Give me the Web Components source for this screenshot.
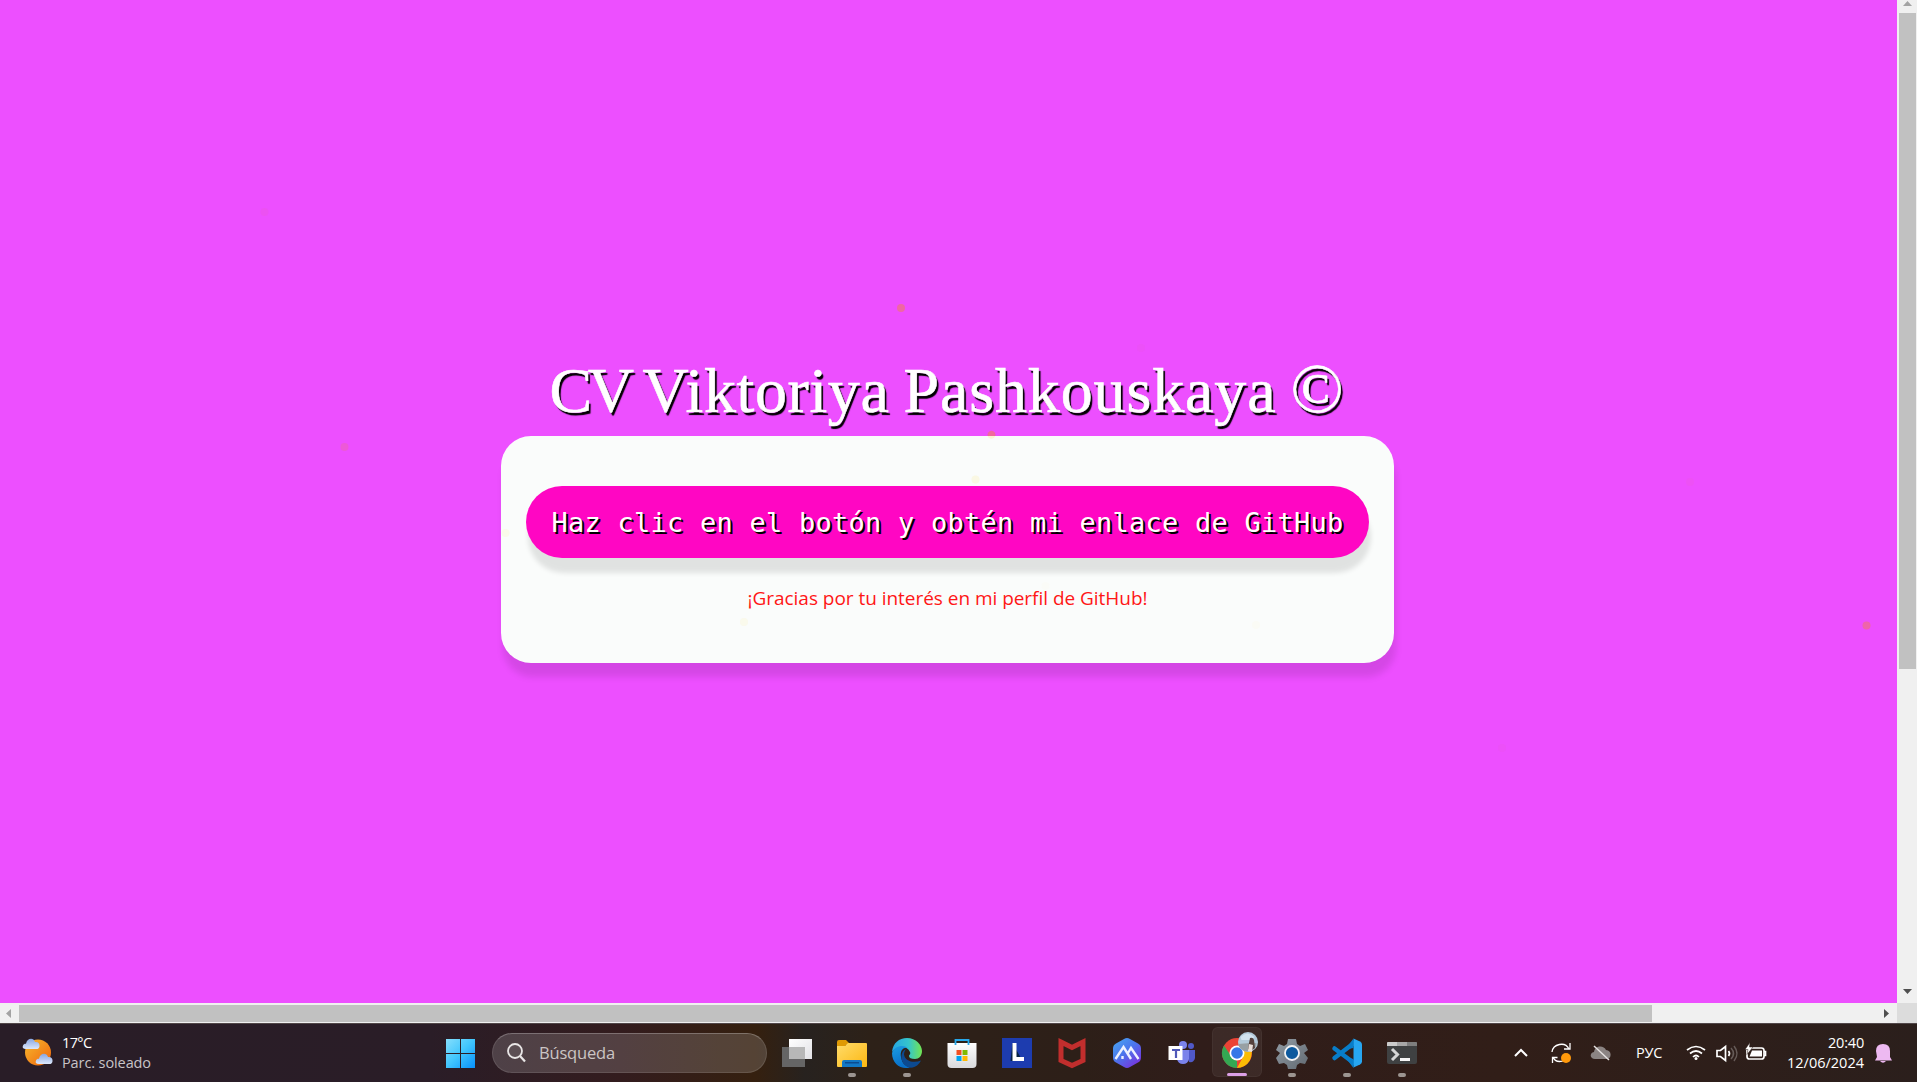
<!DOCTYPE html>
<html lang="es">
<head>
<meta charset="utf-8">
<title>CV Viktoriya Pashkouskaya</title>
<style>
html,body{margin:0;height:100%;overflow:hidden}
body{font-family:"Open Sans","Noto Sans",sans-serif}
</style>
</head>
<body>
<app-screen></app-screen>
<script>
const define=(name,html,init)=>customElements.define(name,class extends HTMLElement{
  connectedCallback(){
    if(this.shadowRoot)return;
    const t=document.createElement('template');
    t.innerHTML=html;
    this.attachShadow({mode:'open'}).append(t.content.cloneNode(true));
    if(init)init(this);
  }
});

/* Spreads the letters of a span so that it takes the width given in pixels. */
const fit=(s,w)=>{
  s.style.letterSpacing=(w-s.getBoundingClientRect().width)/s.textContent.length+'px';
};
define('fit-text',`<style>:host{display:block;white-space:pre}span{display:inline-block}</style><span></span>`,el=>{
  const s=el.shadowRoot.querySelector('span');
  s.textContent=el.getAttribute('text');
  fit(s,+el.getAttribute('width'));
});

define('page-title',`<style>
:host{display:block}
h1{margin:0;white-space:nowrap;color:#fff;font:400 64px/80px "Liberation Serif",serif;-webkit-text-stroke:.6px #fff;text-shadow:2px 3px 1px #000;word-spacing:-2px}
.c{font-size:70px;line-height:60px}
</style><h1><span data-w="79">CV</span> <span data-w="247">Viktoriya</span> <span data-w="373">Pashkouskaya</span> <span class="c" data-w="55">©</span></h1>`,el=>{
  el.shadowRoot.querySelectorAll('span').forEach(s=>fit(s,+s.dataset.w));
});

define('github-button',`<style>
:host{display:block}
button{display:flex;align-items:center;justify-content:center;box-sizing:border-box;width:843px;height:72px;border:0;border-radius:36px;background:#ff06c3;color:#fff;font:27px/35px "DejaVu Sans Mono",monospace;text-shadow:2px 2px 0 #000;box-shadow:2px 15px 5px rgba(0,0,0,.1);padding:0 25px}
</style><button><fit-text text="Haz clic en el botón y obtén mi enlace de GitHub" width="792"></fit-text></button>`);

define('thanks-message',`<style>
:host{display:block;color:#ff1616;font:400 19px/27px "Open Sans",sans-serif}
</style><fit-text text="¡Gracias por tu interés en mi perfil de GitHub!" width="400"></fit-text>`);

define('cv-card',`<style>
:host{display:flex;flex-direction:column;align-items:center;box-sizing:border-box;width:893px;height:227px;padding-top:50px;gap:27px;border-radius:30px;background:#fafcfb;box-shadow:2px 14px 7px rgba(0,0,0,.1)}
</style><slot></slot>`);

define('firefly-layer',`<style>:host{position:absolute;inset:0;pointer-events:none}svg{display:block}</style>
<svg width="1897" height="1003" fill="#f0707c">
<circle cx="901" cy="308" r="4" fill-opacity=".7"/><circle cx="264.500" cy="212" r="4" fill-opacity=".1"/>
<circle cx="344.500" cy="447" r="4" fill-opacity=".3"/><circle cx="1866.500" cy="625.500" r="4" fill-opacity=".65"/>
<circle cx="1141" cy="348" r="4" fill-opacity=".05"/><circle cx="1690" cy="482" r="4" fill-opacity=".08"/>
<circle cx="1502" cy="748" r="4" fill-opacity=".05"/>
<path d="M987.700 436a4 4 0 1 1 7.600 0z" fill-opacity=".75"/>
<g fill="#fbf3c0"><path d="M987.700 436h7.600a4 4 0 0 1-7.600 0z" fill-opacity=".7"/>
<circle cx="975.500" cy="479.500" r="4" fill-opacity=".4"/><circle cx="505.500" cy="533" r="4" fill-opacity=".28"/>
<circle cx="744" cy="622" r="4" fill-opacity=".25"/><circle cx="1045.500" cy="586" r="4" fill-opacity=".07"/>
<circle cx="1256" cy="625" r="4" fill-opacity=".1"/></g></svg>`);

define('scroll-bar',`<style>
:host{display:flex;background:#f0f0f0;box-sizing:border-box}
:host([dir-y]){width:20px;flex-direction:column;padding:0 1px 0 2px;align-items:stretch}
:host(:not([dir-y])){flex:1;height:20px;padding:2px 0 1px}
.box{display:contents}
i{background:#c1c1c1;flex:none}
svg{display:block;flex:none}
b{flex:1}
</style><div class="box"></div>`,el=>{
  el.shadowRoot.querySelector('.box').innerHTML=el.hasAttribute('dir-y')
  ?`<svg width="17" height="13"><path d="M4 6L8.500 1l4.500 5z" fill="#a3a3a3"/></svg><i style="height:656px"></i><b></b><svg width="17" height="18"><path d="M4 4h9L8.500 9z" fill="#4f4f4f"/></svg>`
  :`<svg width="19" height="17"><path d="M11 4v9L6 8.500z" fill="#a3a3a3"/></svg><i style="width:1633px"></i><b></b><svg width="20" height="17"><path d="M7 4v9l5-4.500z" fill="#4f4f4f"/></svg>`;
});

define('weather-widget',`<style>
:host{display:flex;align-items:center;gap:8px;width:444px;padding-left:22px;box-sizing:border-box;color:#fff;font:14.500px/20px "Open Sans",sans-serif}
.s{color:#c8c4c7}
</style><svg width="32" height="32" viewBox="0 0 32 32"><defs><linearGradient id="s" x1="0" y1="0" x2="1" y2="1"><stop stop-color="#f6ba2e"/><stop offset="1" stop-color="#f0640c"/></linearGradient><linearGradient id="c" x2="0" y2="1"><stop stop-color="#88a6e2"/><stop offset="1" stop-color="#dce8fb"/></linearGradient></defs>
<circle cx="16" cy="15.500" r="13" fill="url(#s)"/><path id="k" d="M4 12C1 12 0 10.500 1 8.500 1.500 7 3 6.500 4 6.800 5 1 11.500 0 13 5c3-.5 5 1.500 4.500 4.500C17 11.500 16 12 14.500 12z" fill="url(#c)"/><use href="#k" x="13" y="15"/></svg>
<div><fit-text text="17°C" width="29.500"></fit-text><fit-text class="s" text="Parc. soleado" width="89"></fit-text></div>`);

define('search-box',`<style>
:host{display:flex;align-items:center;gap:13px;width:275px;height:40px;box-sizing:border-box;border:1px solid rgba(255,255,255,.1);border-top-color:rgba(255,255,255,.25);border-radius:20px;background:rgba(255,255,255,.16);padding-left:14px;color:#cbc5c4;font:16.500px/22px "Open Sans",sans-serif}
</style><svg width="19" height="20" fill="none" stroke="#e9e6e6" stroke-width="1.800"><circle cx="8" cy="8" r="7" fill="#fff" fill-opacity=".08"/><path d="M13 13l5 5.500" stroke-width="2.200"/></svg><fit-text text="Búsqueda" width="76"></fit-text>`);

const icons={
start:`<defs><linearGradient id="w" gradientUnits="userSpaceOnUse" x1="3" y1="3" x2="33" y2="33"><stop stop-color="#8ae0fc"/><stop offset=".5" stop-color="#42c6fd"/><stop offset="1" stop-color="#0791fb"/></linearGradient></defs><path fill="url(#w)" d="M4 4h14v14H4zM19 4h14v14H19zM4 19h14v14H4zM19 19h14v14H19z"/>`,
tasks:`<defs><linearGradient id="a" x2="1" y2="1"><stop stop-color="#fff"/><stop offset="1" stop-color="#e1e1e5"/></linearGradient></defs><path fill="url(#a)" d="M10 4h23v20H10z"/><path fill="#656565" d="M3 12h23v20H3z"/><path fill="#b7b7b7" d="M10 12h16v12H10z"/>`,
files:`<defs><linearGradient id="a" x2="1" y2="1"><stop stop-color="#ffdc6b"/><stop offset="1" stop-color="#fcb711"/></linearGradient></defs><path fill="#df9a04" d="M3 7q0-2 2-2h7l4 4h-2l-3 2H3z"/><path fill="url(#a)" d="M3 11h8l3-3h18q1 0 1 1v22q0 1-1 1H4q-1 0-1-1z"/><path fill="#1278c5" d="M8 32v-5q0-2 2-2h16q2 0 2 2v5z"/><path fill="#0b4c90" d="M11 27h14v1.500H11z"/>`,
edge:`<defs><linearGradient id="a" x2="1"><stop stop-color="#25a5e4"/><stop offset=".55" stop-color="#35c5cc"/><stop offset="1" stop-color="#72e551"/></linearGradient><linearGradient id="b" x2=".3" y2="1"><stop stop-color="#1b9de2"/><stop offset="1" stop-color="#086fc9"/></linearGradient></defs><path fill="url(#a)" d="M3 17C4 8 10 3 18 3c9 0 15 7 15 13 0 5-3 8-7 8-4 0-6-1-6-3 0-1 2-2 1-4-3-7-13-6-18 0z"/><path fill="url(#b)" d="M3 18C5 11 14 9 19 13c-6-1-8 4-7 9 1 6 4 9 9 10.500C12 35 3 29 3 18z"/><path fill="#0c4a91" d="M17 14c-7 3-6 16 3 18.500 6 1 10-3 12-7-7 3-16 1-17-6 0-2 1-4 2-5.500z"/>`,
store:`<defs><linearGradient id="a" x2="0" y2="1"><stop stop-color="#fff"/><stop offset="1" stop-color="#d9d9dc"/></linearGradient></defs><path fill="url(#a)" d="M3.500 8h29v21q0 4-4 4h-21q-4 0-4-4z"/><path fill="none" stroke="#28a8ea" stroke-width="1.800" d="M11.500 10V5h13v5"/><path fill="#f25022" d="M12.500 15h5v5h-5z"/><path fill="#7fba00" d="M18.500 15h5v5h-5z"/><path fill="#00a4ef" d="M12.500 21h5v5h-5z"/><path fill="#ffb900" d="M18.500 21h5v5h-5z"/>`,
lapp:`<path fill="#1d3caf" d="M3 3h30v30H3z"/><path fill="#062345" d="M13.500 8l-2 18h12z"/><path fill="none" stroke="#fff" stroke-width="4" d="M15.500 8v16H25"/>`,
mcafee:`<path fill="none" stroke="#c12e2d" stroke-width="5" d="M7 7l11 5.500L29 7v18.500l-11 5-11-5z"/>`,
hexapp:`<defs><linearGradient id="a" y2="1" x2=".8"><stop stop-color="#48aaf2"/><stop offset=".5" stop-color="#4b75ec"/><stop offset="1" stop-color="#7930dd"/></linearGradient></defs><path fill="url(#a)" d="M15 4q3-2 6 0l8 4.500q3 1.500 3 5v9q0 3.500-3 5L21 32q-3 2-6 0l-8-4.500q-3-1.500-3-5v-9q0-3.500 3-5z"/><path d="M6.500 24l8-12 7.500 12M13.500 24v-3M19 18l3-5 7.500 11" fill="none" stroke="#edf1ff" stroke-width="2.400"/>`,
teams:`<circle cx="19" cy="10" r="4" fill="#7b83eb"/><circle cx="27" cy="11" r="3" fill="#5059c9"/><path fill="#5059c9" d="M23 15h8v8q-1 5-6 4z"/><path fill="#7b83eb" d="M13 15h12v9q-1 5-6 5t-6-5z"/><path fill="#fff" d="M4.500 11h14v14h-14z"/><path fill="none" stroke="#5059b9" stroke-width="2.200" d="M8 15h8M12 15v8"/>`,
chrome:`<circle cx="18" cy="18" r="15" fill="#ea4335"/><path fill="#34a853" d="M5 10.500l8 12L18 26v7A15 15 0 0 1 5 10.500z"/><path fill="#fbbc05" d="M18 11h13a15 15 0 0 1-13 22l6-11z"/><circle cx="18" cy="18" r="7.500" fill="#fff"/><circle cx="18" cy="18" r="5.800" fill="#3677e8"/><g><circle cx="29" cy="7" r="10" fill="#b3c9d9"/><path d="M19.300 9q9-1 18-1 1 4-4 7-8 4-13-3z" fill="#98a0a4"/><path d="M21.500 2q7-7 14 0l-4 3h-9z" fill="#d3e2ee"/><path d="M31 3q3-1 4 2l1 8-3 2-4-1 1-6z" fill="#55423d"/><path d="M30 9l4 1-1 7-4-1z" fill="#e9dfda"/></g>`,
settings:`<defs><linearGradient id="a" x2="1" y2="1"><stop stop-color="#919ba4"/><stop offset="1" stop-color="#626a72"/></linearGradient></defs><path fill="url(#a)" d="M14 4h8l1 5 3 2 5-2 3 6-4 3 4 5-3 6-5-1-3 2-1 4h-8l-1-4-3-2-5 1-3-6 4-5-4-3 3-6 5 2 3-2z"/><circle cx="18" cy="18" r="7" fill="#0c599e" stroke="#f1f2f4" stroke-width="1.800"/>`,
code:`<path fill="none" stroke="#087dc9" stroke-width="4.500" stroke-linecap="round" stroke-linejoin="round" d="M5.500 13.500L25 28M5.500 23L25 8"/><path fill="#27a6f1" d="M24.500 3.500l6.500 3q2 1 2 3v17q0 2-2 3l-6.500 3z"/><path fill="#087dc9" d="M16 14.500l8.500-11V13zM16 22l8.500 11V24z"/>`,
terminal:`<path fill="#3f4142" d="M3 7h30v20q0 2-2 2H5q-2 0-2-2z"/><path fill="#cbcbcb" d="M3 8q0-1 1-1h9v4H3z"/><path fill="#a7a7a7" d="M13 7h10v4H13z"/><path fill="#7e7e7e" d="M23 7h9q1 0 1 1v3H23z"/><path fill="none" stroke="#d5d5d5" stroke-width="3" d="M8 14l5.500 5.500L8 25"/><path fill="#f6f6f6" d="M16 23h10v3H16z"/>`
};
define('task-icon',`<style>
:host{display:flex;flex-direction:column;align-items:center;width:55px;height:59px;flex:none;padding-top:12px;box-sizing:border-box}
svg{display:block;overflow:visible;flex:none}
u{display:block;width:8px;height:4px;border-radius:2px;background:#9c9591;margin-top:2px;visibility:hidden}
:host([open]) u,:host([active]) u{visibility:visible}
:host([active]) u{width:20px;background:#dca0e6}
:host([active]){width:50px;height:50px;margin:0 2.500px 1px;padding-top:7px;border-radius:6px;background:rgba(255,255,255,.06);border:1px solid rgba(255,255,255,.04)}
</style><svg width="36" height="36" viewBox="0 0 36 36"></svg><u></u>`,el=>{
  el.shadowRoot.querySelector('svg').innerHTML=icons[el.getAttribute('name')];
});

define('system-tray',`<style>
:host{display:flex;align-items:center;margin-left:auto;height:59px;color:#fff;font:14.500px/20px "Open Sans",sans-serif}
svg{display:block;flex:none}
.t{display:flex;flex-direction:column;align-items:flex-end}
</style>
<svg fill="none" stroke="#fff" stroke-width="2" style="width:112px;height:59px" viewBox="1510 1023 112 59">
<path d="M1515 1056l6-6 6 6"/>
<path d="M1552 1052c1-8 13-11 17-3M1570 1043v6h-6M1567 1057c-3 6-12 6-14 0M1552.500 1063v-5.500h5" stroke-width="1.300"/><circle cx="1566" cy="1058" r="5" fill="#ff990b" stroke="none"/>
<path d="M1595 1059c-5 0-6-6-1-7 1-7 10-7 12-2 6 0 6 9 1 9z" fill="#8b8483" stroke="none"/><path d="M1594 1046l15 14" stroke="#e6e2e1" stroke-width="1.500"/></svg>
<fit-text text="РУС" width="26" style="margin-left:14px;width:26px"></fit-text>
<svg style="width:98px;height:59px;margin-left:19px" viewBox="1681 1023 98 59" fill="none" stroke="#fff" stroke-width="1.700">
<path d="M1687 1050q9-7 18 0M1690 1053.500q6-5 12 0M1693 1057q3-3 6 0"/><circle cx="1696" cy="1058.500" r="1.500" fill="#fff" stroke="none"/>
<path d="M1717 1050.500h3.500l5-4v14l-5-4h-3.500z"/><path d="M1728.500 1051q2 2.500 0 5"/><path d="M1731 1048q5 5.500 0 11M1734 1046q6 7.500 0 15" stroke="#665b58" stroke-width="1.500"/>
<rect x="1747" y="1048" width="17" height="11" rx="2.500"/><path d="M1752 1050.500h10v6h-12.500z" fill="#fff" stroke="none"/><path d="M1764 1051.500h1.500v4h-1.500"/><path d="M1750 1042.500l-5 7h3l-1 5 6-7.500h-3.500z" fill="#fff" stroke="#2d1d19" stroke-width=".5"/></svg>
<div class="t" style="width:85px"><fit-text text="20:40" width="36"></fit-text><fit-text text="12/06/2024" width="77"></fit-text></div>
<svg style="width:53px;height:59px" viewBox="1864 1023 53 59"><path d="M1876 1051q0-7 7-7t7 7v6l2 3.500h-17l2-3.500z" fill="#edb9f1"/><path d="M1880 1061h6q-3 3.500-6 0z" fill="#edb9f1"/></svg>`);

define('task-bar',`<style>
:host{display:flex;align-items:center;height:59px;box-sizing:border-box;box-shadow:inset 0 1px #514749;background:linear-gradient(90deg,#291d27 0,#2a1d27 430px,#331c1e 620px,#35200f 755px,#27221f 805px,#2d2118 870px,#2d1f18 1080px,#301d1a 1200px,#311e18 1500px,#2b1f1c 1917px)}
.a{display:flex;align-items:center}
task-icon[name=start]{width:31px;margin-right:17px}
search-box{margin-right:2px}
</style>
<weather-widget></weather-widget><div class="a"><task-icon name="start"></task-icon><search-box></search-box>
<task-icon name="tasks"></task-icon><task-icon name="files" open></task-icon><task-icon name="edge" open></task-icon><task-icon name="store"></task-icon><task-icon name="lapp"></task-icon><task-icon name="mcafee"></task-icon><task-icon name="hexapp"></task-icon><task-icon name="teams"></task-icon><task-icon name="chrome" active></task-icon><task-icon name="settings" open></task-icon><task-icon name="code" open></task-icon><task-icon name="terminal" open></task-icon></div>
<system-tray></system-tray>`);

define('app-screen',`<style>
:host{display:flex;flex-direction:column;width:1917px;height:1082px}
.top,.low{display:flex}
main{position:relative;display:flex;flex-direction:column;align-items:center;width:1897px;height:1003px;box-sizing:border-box;padding:351px 2px 0 0;gap:5px;background:#ed4fff}
page-title{height:80px}
.corner{width:20px;height:20px;background:#dcdcdc}
</style>
<div class="top"><main><page-title></page-title><cv-card><github-button></github-button><thanks-message></thanks-message></cv-card><firefly-layer></firefly-layer></main><scroll-bar dir-y></scroll-bar></div>
<div class="low"><scroll-bar></scroll-bar><div class="corner"></div></div>
<task-bar></task-bar>`);
</script>
</body>
</html>
